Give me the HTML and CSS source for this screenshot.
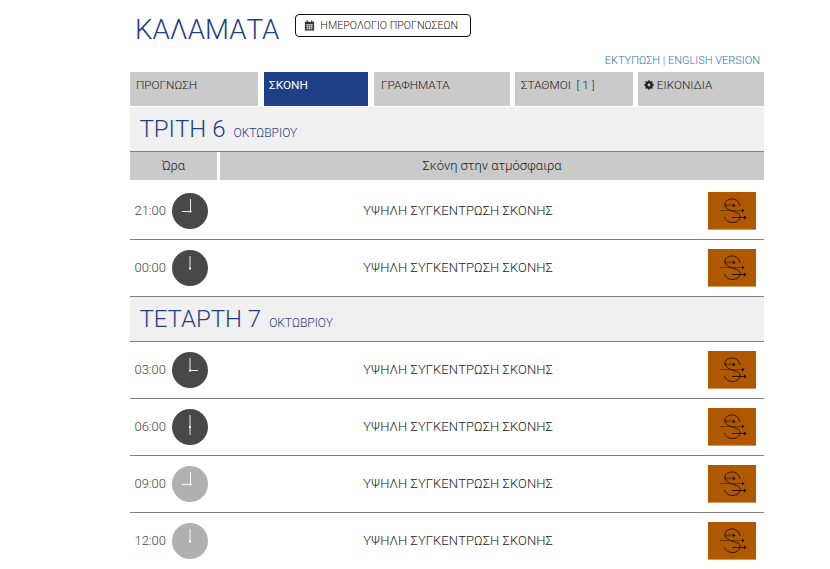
FILE: index.html
```html
<!DOCTYPE html>
<html lang="el">
<head>
    <meta charset="UTF-8">
    <meta name="viewport" content="width=device-width, initial-scale=1.0">
    <title>Καλαματα</title>
    <link rel="stylesheet" href="styles.css">
</head>
<body>
    <svg class="defs" width="0" height="0">
        <symbol id="dust" viewBox="0 0 48 38">
            <rect y="37" width="48" height="1" fill="#cf9a60"/>
            <path d="M16 12h10v2.500h-10z" fill="#7a4300"/>
            <path d="M12 18.500h22" stroke="#6b3a00" stroke-width="1" fill="none"/>
            <g fill="none" stroke="#1c0f02" stroke-width=".9">
                <path d="M32 14c-.5-4-4-7.500-8.500-7-4.500.5-7 3-6.500 6.200.5 3 3.500 4.600 7 5.800 4 1.200 8.500 2 8 6-.5 3.500-3.500 5.500-7 5.500-4 0-8-2-8.500-5.500"/>
                <path d="M24 25.500h12"/>
            </g>
            <path d="M34 16.500l2.500 2-2.500 2zM25 11.500l2.500 2-2.500 2zM36 23.500l2.500 2-2.500 2z" fill="#1c0f02"/>
        </symbol>
        <symbol id="clock-21" viewBox="0 0 36 36"><path d="M18.500 18.500V6M18.500 18.500H10" /><rect x="18" y="18" width="1" height="1" /></symbol>
        <symbol id="clock-00" viewBox="0 0 36 36"><path d="M18 18.500V6" /><rect x="17.500" y="18" width="1" height="1" /></symbol>
        <symbol id="clock-03" viewBox="0 0 36 36"><path d="M18 18.500V6M18 18.500H26" /><rect x="17.500" y="18" width="1" height="1" /></symbol>
        <symbol id="clock-06" viewBox="0 0 36 36"><path d="M18 6V26" /><rect x="17.500" y="17.500" width="1" height="1" /></symbol>
    </svg>

    <div class="page">
        <header class="top">
            <h1>ΚΑΛΑΜΑΤΑ</h1>
            <a class="cal-btn" href="#">
                <svg class="cal-icon" viewBox="0 0 12 12"><path d="M1 2h10v9.500H1z" fill="#333"/><path d="M3.500 .5v2.500M8.500 .5v2.500" stroke="#333" stroke-width="1.500"/><path d="M2 5h8M2 7h8M2 9h8M4 4.500V10.500M6 4.500V10.500M8 4.500V10.500" stroke="#fff" stroke-width=".6"/></svg>
                ΗΜΕΡΟΛΟΓΙΟ ΠΡΟΓΝΩΣΕΩΝ
            </a>
        </header>
        <div class="links"><a href="#">ΕΚΤΥΠΩΣΗ</a> | <a href="#">ENGLISH VERSION</a></div>

        <nav class="tabs">
            <a class="tab tab-1" href="#">ΠΡΟΓΝΩΣΗ</a>
            <a class="tab tab-2 active" href="#">ΣΚΟΝΗ</a>
            <a class="tab tab-3" href="#">ΓΡΑΦΗΜΑΤΑ</a>
            <a class="tab tab-4" href="#">ΣΤΑΘΜΟΙ &nbsp;[ 1 ]</a>
            <a class="tab tab-5" href="#">
                <svg class="gear" viewBox="0 0 12 12"><circle cx="6" cy="6" r="3.400" fill="none" stroke="#222" stroke-width="2.400"/><path d="M6 .2v11.600M.2 6h11.600M1.900 1.900l8.200 8.200M10.100 1.900l-8.200 8.200" stroke="#222" stroke-width="1.800"/><circle cx="6" cy="6" r="1.700" fill="#cacaca"/></svg>
                ΕΙΚΟΝΙΔΙΑ
            </a>
        </nav>

        <div class="day"><span class="day-name">ΤΡΙΤΗ 6</span><span class="month">ΟΚΤΩΒΡΙΟΥ</span></div>
        <div class="head">
            <div class="head-hour">Ώρα</div>
            <div class="head-main">Σκόνη στην ατμόσφαιρα</div>
        </div>

        <div class="row row-first">
            <div class="hour">21:00</div>
            <svg class="clock"><use href="#clock-21"/></svg>
            <div class="desc">ΥΨΗΛΗ ΣΥΓΚΕΝΤΡΩΣΗ ΣΚΟΝΗΣ</div>
            <svg class="dust"><use href="#dust"/></svg>
        </div>
        <div class="row">
            <div class="hour">00:00</div>
            <svg class="clock"><use href="#clock-00"/></svg>
            <div class="desc">ΥΨΗΛΗ ΣΥΓΚΕΝΤΡΩΣΗ ΣΚΟΝΗΣ</div>
            <svg class="dust"><use href="#dust"/></svg>
        </div>

        <div class="day"><span class="day-name">ΤΕΤΑΡΤΗ 7</span><span class="month">ΟΚΤΩΒΡΙΟΥ</span></div>

        <div class="row">
            <div class="hour">03:00</div>
            <svg class="clock"><use href="#clock-03"/></svg>
            <div class="desc">ΥΨΗΛΗ ΣΥΓΚΕΝΤΡΩΣΗ ΣΚΟΝΗΣ</div>
            <svg class="dust"><use href="#dust"/></svg>
        </div>
        <div class="row">
            <div class="hour">06:00</div>
            <svg class="clock"><use href="#clock-06"/></svg>
            <div class="desc">ΥΨΗΛΗ ΣΥΓΚΕΝΤΡΩΣΗ ΣΚΟΝΗΣ</div>
            <svg class="dust"><use href="#dust"/></svg>
        </div>
        <div class="row">
            <div class="hour">09:00</div>
            <svg class="clock light"><use href="#clock-21"/></svg>
            <div class="desc">ΥΨΗΛΗ ΣΥΓΚΕΝΤΡΩΣΗ ΣΚΟΝΗΣ</div>
            <svg class="dust"><use href="#dust"/></svg>
        </div>
        <div class="row">
            <div class="hour">12:00</div>
            <svg class="clock light"><use href="#clock-00"/></svg>
            <div class="desc">ΥΨΗΛΗ ΣΥΓΚΕΝΤΡΩΣΗ ΣΚΟΝΗΣ</div>
            <svg class="dust"><use href="#dust"/></svg>
        </div>
    </div>
</body>
</html>
```
FILE: styles.css
```css
html, body {
    height: 569px;
    overflow: hidden;
}
body {
    margin: 0;
    font-family: Roboto, "Noto Sans", sans-serif;
    font-weight: 300;
    color: #222;
    background-color: #fff;
}
a {
    text-decoration: none;
    color: inherit;
}
.defs {
    position: absolute;
}
.page {
    width: 634px;
    margin-left: 130px;
}
.top {
    display: flex;
    align-items: flex-start;
    height: 52px;
    padding-top: 14px;
    box-sizing: border-box;
}
h1 {
    margin: 0 0 0 5px;
    font-size: 27.7px;
    line-height: 32px;
    font-weight: 300;
    color: #1f4088;
}
.cal-btn {
    display: flex;
    align-items: center;
    gap: 5px;
    height: 21px;
    margin-left: 16px;
    padding: 0 12px 0 8px;
    border: 1px solid #111;
    border-radius: 4px;
    font-size: 10.7px;
    color: #222;
}
.cal-icon {
    width: 11px;
    height: 11px;
}
.links {
    height: 20px;
    padding-top: 2px;
    box-sizing: border-box;
    margin-right: 4px;
    text-align: right;
    font-size: 11px;
    line-height: 14px;
    color: #2e75b6;
}
.tabs {
    display: flex;
    height: 35px;
    background-color: #fff;
}
.tab {
    box-sizing: border-box;
    height: 34px;
    padding: 6px;
    background-color: #cacaca;
    font-size: 11.8px;
    line-height: 14px;
    color: #222;
}
.tab-1 { width: 128px; }
.tab-2 { width: 104px; margin-left: 6px; padding-left: 5px; }
.tab-3 { width: 136px; margin-left: 6px; padding-left: 7px; }
.tab-4 { width: 118px; margin-left: 5px; }
.tab-5 { width: 126px; margin-left: 5px; }
.tab.active {
    background-color: #1f4088;
    color: #fff;
    font-weight: 400;
}
.gear {
    width: 10px;
    height: 10px;
    vertical-align: -1px;
}
.day {
    display: flex;
    align-items: baseline;
    box-sizing: border-box;
    height: 45px;
    padding: 6px 0 0 9.500px;
    background-color: #f0f0f0;
    border-bottom: 1px solid #808080;
    color: #1f4088;
}
.day-name {
    font-size: 24px;
    line-height: 32px;
}
.month {
    margin-left: 8px;
    font-size: 12px;
}
.head {
    display: flex;
    gap: 3px;
    height: 28px;
    font-size: 13px;
    line-height: 28px;
    text-align: center;
}
.head-hour {
    width: 87px;
    background-color: #cacaca;
}
.head-main {
    flex: 1;
    background-color: #cacaca;
}
.row {
    display: flex;
    align-items: center;
    box-sizing: border-box;
    height: 57px;
    border-bottom: 1px solid #808080;
}
.row-first {
    height: 60px;
    padding-top: 2px;
}
.hour {
    width: 36px;
    margin: 0 6px 2px 0;
    text-align: right;
    font-size: 13px;
    color: #444;
}
.clock {
    width: 36px;
    height: 36px;
    border-radius: 50%;
    background-color: #484848;
    fill: #fff;
    stroke: #fff;
    stroke-width: .9;
}
.clock.light {
    background-color: #b0b0b0;
}
.desc {
    flex: 1;
    margin-bottom: 2px;
    text-align: center;
    font-size: 13px;
    letter-spacing: .08px;
}
.row-first .hour,
.row-first .desc {
    margin-bottom: 0;
}
.dust {
    width: 48px;
    height: 38px;
    margin-right: 8px;
    background-color: #b05800;
    fill: none;
    stroke: none;
}
```
